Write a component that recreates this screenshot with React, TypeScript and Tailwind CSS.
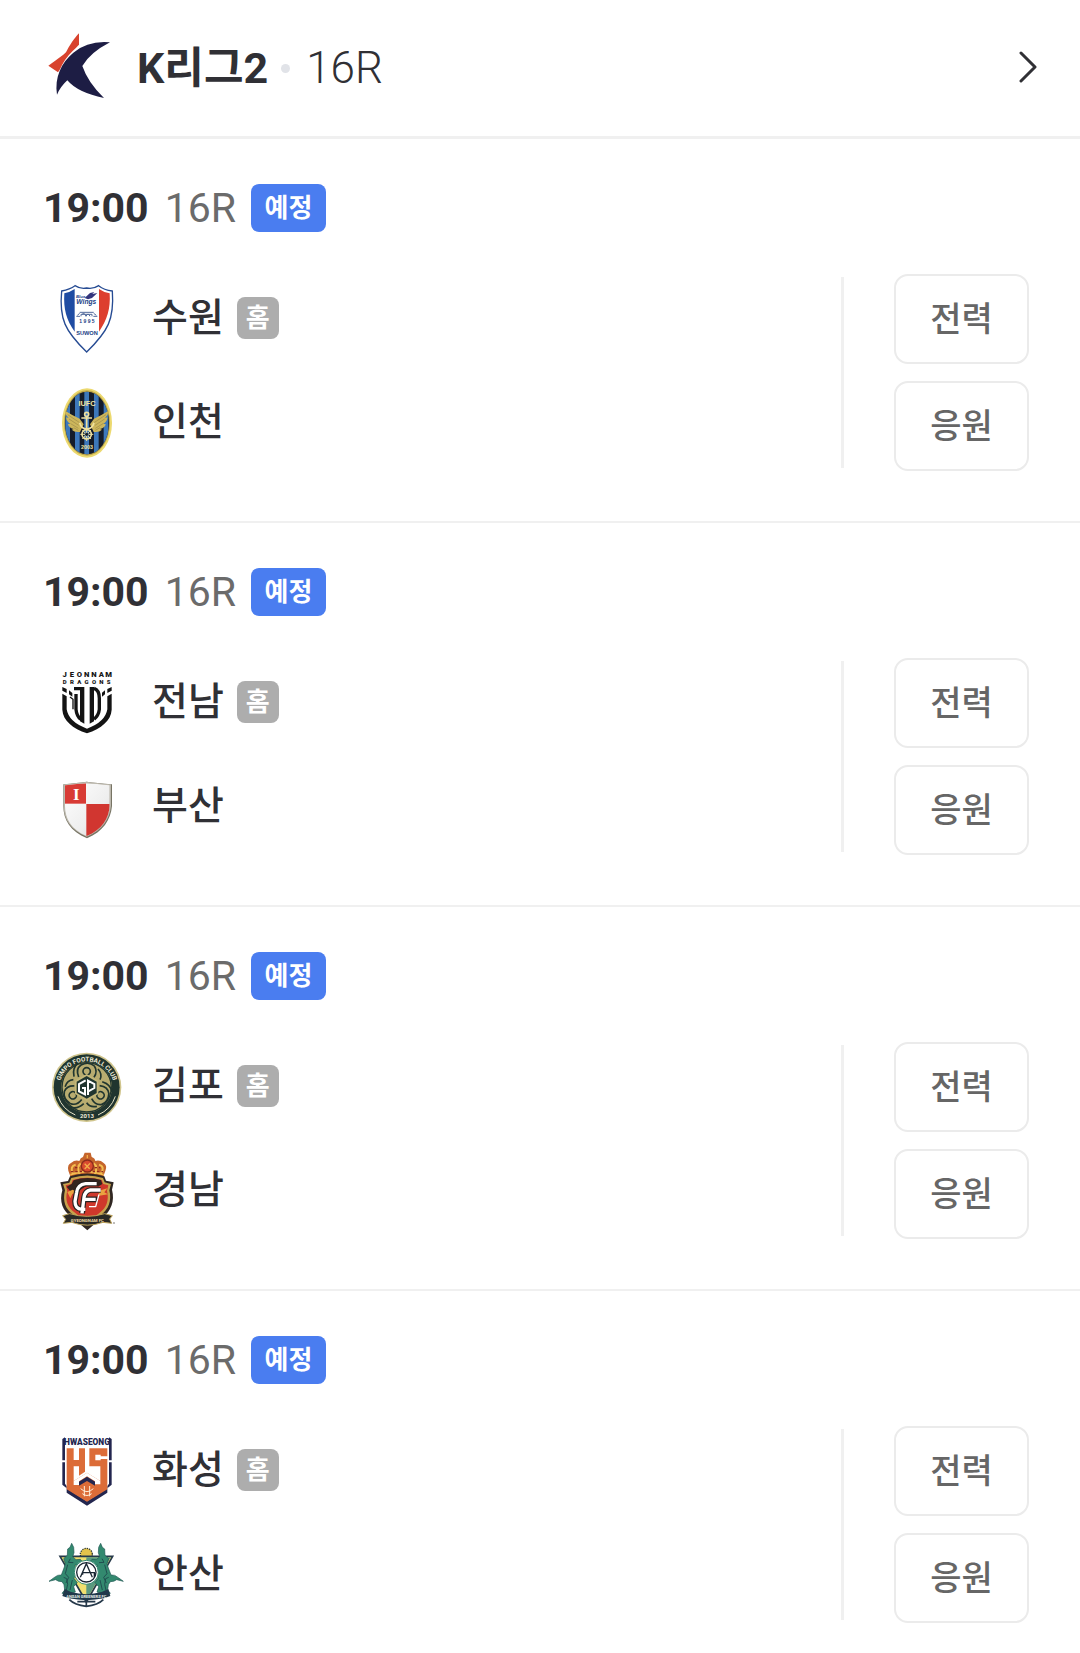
import type { ReactNode } from "react";

type Team = {
  name: string;
  crest: ReactNode;
};

type Match = {
  time: string;
  round: string;
  status: string;
  home: Team;
  away: Team;
};

function Emblem({ viewBox, children }: { viewBox: string; children: ReactNode }) {
  return (
    <svg viewBox={viewBox} className="h-[88px] w-[88px] shrink-0" aria-hidden="true">
      {children}
    </svg>
  );
}

function LeagueLogo() {
  return (
    <Emblem viewBox="129 72 264 264">
      <path
        d="M237 100 C224 113 207 139 198 157 Q190 166 145 197 L174 217 L180 208 C188 188 201 169 218 153 Q232 139 237 134 Z"
        fill="#d8432e"
      />
      <path
        d="M330 127 Q265 121 220 158 C184 188 163 232 171 284 Q182 259 202 241 Q233 278 312 294 Q264 248 247 198 Q270 158 330 127 Z"
        fill="#1d1d44"
      />
    </Emblem>
  );
}

function SuwonCrest() {
  return (
    <Emblem viewBox="9 12 264 264">
      <path
        d="M65 63 Q90 58 105 47 Q122 58 140 54 Q159 58 176 47 Q192 60 217 63 C223 147 205 183 140 246 C75 183 57 147 65 63 Z"
        fill="#fff"
        stroke="#264b93"
        strokeWidth="4"
      />
      <path d="M73 70 Q91 66 104 57 V185 C79 150 70 118 73 70 Z" fill="#1f4ca3" />
      <path d="M177 57 Q191 67 209 70 C212 118 201 150 177 185 Z" fill="#dd3f2f" />
      <path d="M134 84 L150 69 L163 66 L157 72 L172 69 L156 84 L144 88 Z" fill="#34357d" />
      <g fill="#203e85" fontFamily="Liberation Sans" fontWeight="700" textAnchor="middle">
        <text x="122" y="83" fontSize="13" fontStyle="italic">
          Blue
        </text>
        <text x="139" y="101" fontSize="20" fontStyle="italic">
          Wings
        </text>
        <text x="141" y="158" fontSize="15">
          1 9 9 5
        </text>
        <text x="141" y="196" fontSize="17">
          SUWON
        </text>
      </g>
      <path
        d="M109 139 H120 M123 139 V133 H156 V139 M160 139 H172 M119 127 H161 M126 133 Q133 126 138 139 Q144 126 150 139 M112 136 L119 130 M161 130 L169 136"
        fill="none"
        stroke="#526a9d"
        strokeWidth="3"
      />
    </Emblem>
  );
}

function IncheonCrest() {
  return (
    <Emblem viewBox="9 324 264 264">
      <clipPath id="incheon-clip">
        <ellipse cx="141" cy="459" rx="66" ry="94" />
      </clipPath>
      <ellipse cx="141" cy="459" rx="75" ry="104" fill="#ecd96f" />
      <ellipse cx="141" cy="459" rx="69" ry="98" fill="#c0a84a" />
      <g clipPath="url(#incheon-clip)">
        <rect x="72" y="360" width="138" height="200" fill="#151c2a" />
        <path
          d="M83 360 V560 M112 360 V560 M140 360 V560 M169 360 V560 M198 360 V560"
          stroke="#3d78bb"
          strokeWidth="14"
        />
      </g>
      <path
        d="M75 422 Q94 434 119 446 L131 463 L120 486 Q103 488 95 479 L101 477 Q85 473 84 462 L91 462 Q77 451 79 442 L86 444 Q76 434 75 422 Z M206 422 Q187 434 162 446 L150 463 L161 486 Q178 488 186 479 L180 477 Q196 473 197 462 L190 462 Q204 451 202 442 L195 444 Q205 434 206 422 Z"
        fill="#cdb65b"
      />
      <path
        d="M83 434 L119 458 M87 447 L116 466 M92 461 L115 475 M101 473 L115 481 M198 434 L162 458 M194 447 L165 466 M189 461 L166 475 M180 473 L166 481"
        stroke="#9c8a48"
        strokeWidth="2"
      />
      <g fill="none" stroke="#efe1a0" strokeWidth="5">
        <circle cx="140" cy="433" r="6" />
        <path d="M140 438 V480 M124 444 H156 M119 458 Q124 477 140 477 Q157 477 162 458" />
        <circle cx="140" cy="493" r="14" />
        <path
          d="M140 474 V513 M121 493 H160 M127 480 L153 507 M153 480 L127 507"
          strokeWidth="3"
        />
      </g>
      <circle cx="140" cy="493" r="5" fill="#17202c" />
      <g fill="#f3e6a4" fontFamily="Liberation Sans" fontWeight="700" textAnchor="middle">
        <text x="141" y="408" fontSize="22">
          IUFC
        </text>
        <text x="141" y="537" fontSize="16">
          2003
        </text>
      </g>
    </Emblem>
  );
}

function JeonnamCrest() {
  return (
    <Emblem viewBox="-20 -4 264 264">
      <g fill="#151515" fontFamily="Roboto" fontWeight="900" textAnchor="middle">
        {"JEONNAM".split("").map((c, i) => (
          <text key={i} x={45 + i * 22} y="53" fontSize="23">
            {c}
          </text>
        ))}
        {"DRAGONS".split("").map((c, i) => (
          <text key={i} x={45 + i * 22} y="74" fontSize="18">
            {c}
          </text>
        ))}
      </g>
      <g fill="#131313">
        <path d="M38 83 L51 89 V101 L38 94 Z M186 83 L173 89 V101 L186 94 Z" />
        <path d="M38 103 L51 111 V150 Q57 188 112 208 Q167 188 173 150 V111 L186 103 V151 C184 184 155 207 112 222 C69 207 40 184 38 151 Z" />
        <path d="M58 93 L68 101 V112 L58 105 Z M166 93 L157 100 V112 L166 105 Z" />
        <path d="M73 83 H104 V193 L91 186 V93 H73 Z" />
        <path d="M120 83 H133 V186 L120 193 Z" />
      </g>
      <g fill="none" stroke="#131313">
        <path d="M79 104 V150 Q81 170 93 180" strokeWidth="10" />
        <path d="M61 113 L70 120 V150" strokeWidth="4" />
        <path d="M133 87 Q149 92 149 117 V150 Q147 168 133 180" strokeWidth="10" />
      </g>
    </Emblem>
  );
}

function BusanCrest() {
  return (
    <Emblem viewBox="-20 -22 264 264">
      <defs>
        <linearGradient id="busan-silver" x1="0" y1="0" x2="1" y2="1">
          <stop offset="0" stopColor="#ffffff" />
          <stop offset="60%" stopColor="#eeeeee" />
          <stop offset="100%" stopColor="#c9c9c9" />
        </linearGradient>
        <clipPath id="busan-clip">
          <path d="M46 48 Q84 44 111 42 Q139 44 180 48 V110 C177 147 158 181 111 200 C64 181 46 147 46 110 Z" />
        </clipPath>
      </defs>
      <path
        d="M41 45 Q84 41 111 37 Q139 41 187 45 V110 C183 152 160 187 112 207 C62 186 41 152 41 110 Z"
        fill="#777464"
      />
      <path
        d="M42 45 Q84 41 111 37 Q139 41 184 45 V110 C180 148 159 183 111 202 C64 183 42 150 42 110 Z"
        fill="#bbb7ac"
      />
      <g clipPath="url(#busan-clip)">
        <rect x="42" y="38" width="144" height="170" fill="url(#busan-silver)" />
        <rect x="42" y="38" width="67" height="65" fill="#d83b35" />
        <rect x="110" y="104" width="76" height="104" fill="#d13630" />
      </g>
      <text
        x="80"
        y="91"
        fill="#fff"
        fontFamily="Liberation Serif"
        fontSize="51"
        fontWeight="700"
        textAnchor="middle"
      >
        I
      </text>
    </Emblem>
  );
}

function GimpoCrest() {
  return (
    <Emblem viewBox="-9 -8 264 264">
      <defs>
        <path id="gimpo-ring" d="M40 146 A83 83 0 1 1 204 146" />
      </defs>
      <circle cx="122" cy="128" r="104" fill="#d0c58d" />
      <circle cx="122" cy="128" r="99" fill="#20352f" />
      <circle cx="122" cy="128" r="76" fill="#b8ac70" />
      {/* three spirals woven round the hexagon */}
      {["rotate(0 122 128)", "rotate(120 122 128)", "rotate(240 122 128)"].map((t) => (
        <g key={t} transform={t} fill="none" stroke="#20352f" strokeWidth="5">
          <circle cx="122" cy="80" r="11" />
          <path d="M98 97 Q88 73 105 61 Q128 49 145 64 Q156 80 144 98" />
          <path d="M84 96 Q78 68 97 55 M156 73 Q170 88 162 105" />
        </g>
      ))}
      <circle cx="122" cy="128" r="74" fill="none" stroke="#20352f" strokeWidth="4" />
      <path d="M122 88 L157 108 V148 L122 168 L87 148 V108 Z" fill="#c3b779" />
      <path d="M122 94 L152 111 V145 L122 162 L92 145 V111 Z" fill="#20352f" />
      <path
        d="M119 107 L99 118 V140 L117 149 V130 H108 M126 151 V108 L145 118 V130 L127 140"
        fill="none"
        stroke="#fff"
        strokeWidth="6"
      />
      <g fill="#f1edda" fontFamily="Roboto" fontWeight="700" textAnchor="middle">
        <text fontSize="19">
          <textPath href="#gimpo-ring" startOffset="50%">
            GIMPO FOOTBALL CLUB
          </textPath>
        </text>
        <text x="123" y="221" fontSize="18">
          2013
        </text>
      </g>
      <path
        d="M36 155 Q49 194 88 211 M208 155 Q195 194 156 211"
        fill="none"
        stroke="#e9e4c8"
        strokeWidth="3"
      />
    </Emblem>
  );
}

function GyeongnamCrest() {
  return (
    <Emblem viewBox="-6 5 264 264">
      {/* crown */}
      <path
        d="M76 96 L70 79 Q66 60 79 55 Q90 46 103 50 Q106 40 114 38 L119 25 H137 L140 38 Q150 41 151 50 Q165 46 176 56 Q188 64 181 80 L175 96 Z"
        fill="#c5652c"
      />
      <path
        d="M83 88 Q74 65 92 61 M104 90 Q94 67 107 57 M149 90 Q160 66 146 57 M168 88 Q181 67 162 61 M76 91 Q126 72 176 91"
        fill="none"
        stroke="#f3bd50"
        strokeWidth="6"
      />
      <path
        d="M78 82 H174 M90 70 H104 M149 70 H166"
        stroke="#912a20"
        strokeWidth="4"
        strokeDasharray="7 6"
      />
      <circle cx="127" cy="65" r="18" fill="#d84a2f" stroke="#8d2c1c" strokeWidth="4" />
      <path d="M119 58 L134 73 M135 57 L119 74 M127 32 V42" stroke="#f5b04a" strokeWidth="4" />
      {/* shield */}
      <path
        d="M75 96 Q127 79 178 96 L183 109 L206 114 L201 136 C210 170 198 201 172 219 L127 258 L81 219 C53 201 42 171 52 138 L46 114 L69 110 Z"
        fill="#302722"
      />
      <path
        d="M79 101 Q127 86 174 101 L179 114 L198 119 L193 138 C201 169 190 196 169 211 L127 243 L85 211 C61 196 52 169 60 138 L54 119 L73 115 Z"
        fill="#c7a24c"
      />
      <path
        d="M83 107 Q127 94 170 107 L175 119 L190 123 L186 139 C193 168 184 191 164 205 L127 235 L90 205 C68 191 59 166 67 139 L62 123 L79 119 Z"
        fill="#cf382b"
      />
      <path
        d="M65 127 L80 119 L86 108 Q126 94 168 107 L172 119 L159 127 L136 117 L98 142 L78 143 Z"
        fill="#33251f"
      />
      <path
        d="M67 143 L83 136 L96 143 L82 149 L76 162 Z M160 140 L187 132 L178 144 L189 150 L163 154 Z"
        fill="#eaa240"
      />
      <g fill="none" strokeLinejoin="round">
        <path
          d="M155 118 H122 Q98 121 95 144 L90 171 Q90 194 110 195 H121 M167 137 H136 Q120 140 117 159 L111 207 M119 165 H158"
          stroke="#282321"
          strokeWidth="17"
        />
        <path
          d="M155 118 H122 Q98 121 95 144 L90 171 Q90 194 110 195 H121 M167 137 H136 Q120 140 117 159 L111 207 M119 165 H152"
          stroke="#fff"
          strokeWidth="10"
        />
        <path d="M162 150 L152 187 H132" stroke="#fff" strokeWidth="4" />
      </g>
      <path
        d="M53 214 L74 208 Q127 224 179 208 L202 214 L194 224 L200 237 L174 234 Q127 251 80 234 L55 237 L62 225 Z"
        fill="#2a2925"
        stroke="#baa058"
        strokeWidth="3"
      />
      <text
        x="127"
        y="232"
        fill="#f2dfac"
        fontFamily="Roboto"
        fontSize="13"
        fontWeight="700"
        textAnchor="middle"
      >
        GYEONGNAM FC
      </text>
      <circle cx="207" cy="236" r="2" fill="#4c4742" />
    </Emblem>
  );
}

function HwaseongCrest() {
  return (
    <Emblem viewBox="-5 -9 264 264">
      <g fill="#23264f">
        <path d="M53 30 L61 25 V94 H53 Z M53 100 H61 V164 L66 171 V178 L53 167 Z" />
        <path d="M201 30 L193 25 V94 H201 Z M201 100 H193 V164 L188 171 V178 L201 167 Z" />
        <path d="M66 178 L127 217 L188 178 V191 L127 230 L66 191 Z" />
      </g>
      <text
        x="127"
        y="48"
        fill="#23264f"
        fontFamily="Roboto"
        fontSize="25"
        fontWeight="900"
        textAnchor="middle"
      >
        HWASEONG
      </text>
      <path d="M66 58 H188 V181 L127 218 L66 181 Z" fill="#dc6c38" />
      {/* gaps that open up the monogram */}
      <g fill="#fff">
        <path d="M87 56 H103 V93 H87 Z M87 112 H103 V146 L87 156 Z" />
        <path d="M121 56 H134 V112 H167 V156 L134 136 L127 131 L103 146 V140 L121 128 Z" />
        <path d="M152 77 H168 V82 H190 V90 H168 V94 H152 Z" />
        <path d="M87 156 L127 131 L167 156 V166 L151 166 V157 L127 142 L103 157 V168 H87 Z" />
      </g>
      <path d="M103 158 L127 143 L151 158 V170 L127 156 L103 170 Z" fill="#23264f" />
      <path d="M127 163 L148 177 L140 198 L127 208 L114 198 L106 177 Z" fill="#dc6c38" />
      <path
        d="M108 179 Q127 197 146 179 M113 194 Q127 205 141 194 M119 171 V202 M135 171 V202"
        fill="none"
        stroke="#fff0dc"
        strokeWidth="3"
      />
    </Emblem>
  );
}

function AnsanCrest() {
  return (
    <Emblem viewBox="9 -12 264 264">
      {/* sunflower and triangle */}
      <circle
        cx="139"
        cy="61"
        r="18"
        fill="#e4c34b"
        stroke="#303c36"
        strokeWidth="4"
        strokeDasharray="4 3"
      />
      <path d="M60 67 H218 L139 204 Z" fill="#f0df70" stroke="#26394a" strokeWidth="5" />
      <path d="M139 70 H212 L139 199 Z" fill="#5c9a80" />
      {/* wolves, one each side */}
      {["translate(0 0)", "translate(277 0) scale(-1 1)"].map((t) => (
        <g key={t} transform={t}>
          <path
            d="M95 28 L101 40 L102 56 L98 68 L108 77 L121 76 L128 84 L113 93 L105 93 L109 113 L102 133 L112 146 L101 158 L106 174 L84 181 L66 178 L74 168 L72 152 L66 143 Q54 143 47 137 L27 142 L42 131 Q53 121 64 123 L72 102 L76 89 L71 74 L82 64 L83 45 L90 40 Z"
            fill="#33896f"
            stroke="#1f5753"
            strokeWidth="2"
          />
          <path
            d="M83 92 L76 119 L86 130 L78 147 M91 74 L85 85 L100 86 M71 130 L80 134 L83 151 L79 169 M97 138 L90 168"
            fill="none"
            stroke="#204f50"
            strokeWidth="3"
          />
        </g>
      ))}
      <circle cx="139" cy="115" r="36" fill="#fff" stroke="#33896f" strokeWidth="3" />
      <circle cx="139" cy="115" r="29" fill="none" stroke="#192532" strokeWidth="4" />
      <path
        d="M121 130 L139 89 L157 130 M128 116 H163 V130 M128 122 V116"
        fill="none"
        stroke="#192532"
        strokeWidth="4"
      />
      {/* ribbon and anchor */}
      <path
        d="M88 197 Q104 213 139 217 Q174 213 190 197 M139 188 V219 M112 203 H166"
        fill="none"
        stroke="#26394a"
        strokeWidth="5"
      />
      <path
        d="M74 165 L93 174 Q139 187 185 174 L205 165 L211 186 L192 193 Q139 204 87 193 L67 186 Z"
        fill="#21394b"
      />
      <text
        x="139"
        y="193"
        fill="#e4eee8"
        fontFamily="Roboto"
        fontSize="12"
        fontWeight="700"
        textAnchor="middle"
      >
        ANSAN GREENERS FC
      </text>
    </Emblem>
  );
}

const matches: Match[] = [
  {
    time: "19:00",
    round: "16R",
    status: "예정",
    home: { name: "수원", crest: <SuwonCrest /> },
    away: { name: "인천", crest: <IncheonCrest /> },
  },
  {
    time: "19:00",
    round: "16R",
    status: "예정",
    home: { name: "전남", crest: <JeonnamCrest /> },
    away: { name: "부산", crest: <BusanCrest /> },
  },
  {
    time: "19:00",
    round: "16R",
    status: "예정",
    home: { name: "김포", crest: <GimpoCrest /> },
    away: { name: "경남", crest: <GyeongnamCrest /> },
  },
  {
    time: "19:00",
    round: "16R",
    status: "예정",
    home: { name: "화성", crest: <HwaseongCrest /> },
    away: { name: "안산", crest: <AnsanCrest /> },
  },
];

function TeamRow({ team, home = false }: { team: Team; home?: boolean }) {
  return (
    <div className="flex h-[88px] items-center">
      {team.crest}
      <span className="ml-[21px] text-[39px] leading-[56px] font-medium">{team.name}</span>
      {home && (
        <span className="ml-[13px] flex h-[42px] w-[42px] items-center justify-center rounded-lg bg-[#adadad] text-[26px] leading-[38px] font-bold text-white">
          홈
        </span>
      )}
    </div>
  );
}

function ActionButton({ label }: { label: string }) {
  return (
    <button
      type="button"
      className="flex h-[90px] w-[135px] items-center justify-center rounded-[14px] border-2 border-[#ebebeb] text-[34px] leading-[48px] font-medium text-[#666666]"
    >
      {label}
    </button>
  );
}

function MatchCard({ match }: { match: Match }) {
  return (
    <li className="border-b-2 border-[#f0f0f0] pt-[45px] pr-[51px] pb-[50px] pl-[43px] last:border-b-0 last:pb-7">
      <div className="flex h-12 items-center">
        <span className="text-[41px] leading-[46px] font-bold">{match.time}</span>
        <span className="ml-4 text-[41px] leading-[46px] font-normal text-[#6b6b6b]">
          {match.round}
        </span>
        <span className="ml-[15px] flex h-12 w-[75px] items-center justify-center rounded-lg bg-[#4a7df0] text-[26px] leading-[38px] font-bold text-white">
          {match.status}
        </span>
      </div>
      <div className="mt-[42px] flex items-start">
        <div className="flex flex-1 flex-col gap-4">
          <TeamRow team={match.home} home />
          <TeamRow team={match.away} />
        </div>
        <div className="flex items-center">
          <div className="h-[191px] w-[3px] bg-[#f0f0f0]" />
          <div className="ml-[50px] flex flex-col gap-[17px]">
            <ActionButton label="전력" />
            <ActionButton label="응원" />
          </div>
        </div>
      </div>
    </li>
  );
}

export default function App() {
  return (
    <main className="bg-white font-['Roboto','Noto_Sans_CJK_KR',sans-serif] text-[#303035]">
      <a
        href="#league"
        className="flex items-center border-b-3 border-[#f0f0f0] py-6 pr-[42px] pl-[43px]"
      >
        <LeagueLogo />
        <h1 className="ml-1.5 text-[43px] leading-[64px] font-bold">K리그2</h1>
        <span className="ml-[13px] h-[9px] w-[9px] rounded-full bg-[#e1e3e8]" />
        <span className="ml-4 text-[44px] leading-[64px] font-light">16R</span>
        <svg
          viewBox="0 0 20 34"
          className="ml-auto h-[34px] w-5"
          fill="none"
          stroke="#303035"
          strokeWidth="3"
          strokeLinecap="round"
          strokeLinejoin="round"
          aria-hidden="true"
        >
          <path d="M3 2 L17 16 L3 30" />
        </svg>
      </a>
      <ul>
        {matches.map((m) => (
          <MatchCard key={m.home.name} match={m} />
        ))}
      </ul>
    </main>
  );
}
